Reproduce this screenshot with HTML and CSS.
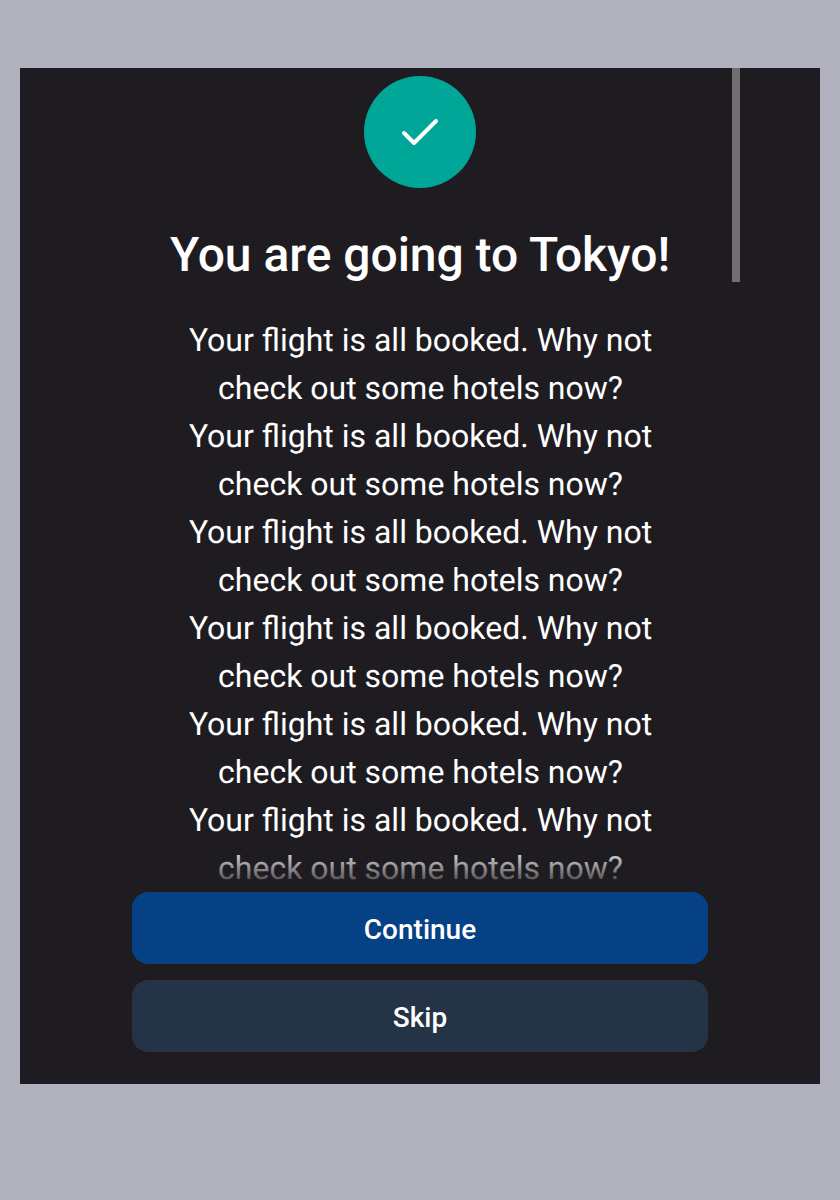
FILE: index.html
```html
<!DOCTYPE html>
<html lang="en">
<head>
<meta charset="utf-8">
<title>Booking confirmed</title>
<link rel="stylesheet" href="styles.css">
</head>
<body>
<main class="modal">
  <section class="content">
    <div class="badge">
      <svg class="check" viewBox="0 0 48 48" fill="none"><path d="M8 25 L18 35 L40 13" stroke="#fff" stroke-width="4" stroke-linecap="round" stroke-linejoin="round"/></svg>
    </div>
    <h1 class="title">You are going to Tokyo!</h1>
    <p class="description">Your flight is all booked. Why not<br>check out some hotels now?<br>Your flight is all booked. Why not<br>check out some hotels now?<br>Your flight is all booked. Why not<br>check out some hotels now?<br>Your flight is all booked. Why not<br>check out some hotels now?<br>Your flight is all booked. Why not<br>check out some hotels now?<br>Your flight is all booked. Why not<br>check out some hotels now?</p>
    <div class="scrollbar"></div>
    <div class="fade"></div>
  </section>
  <footer class="actions">
    <button class="button primary">Continue</button>
    <button class="button secondary">Skip</button>
  </footer>
</main>
</body>
</html>
```
FILE: styles.css
```css
* { box-sizing: border-box; }
body {
  margin: 0;
  height: 1200px;
  padding: 68px 20px 116px;
  background: #b1b1bd;
  font-family: Roboto, sans-serif;
  color: #fff;
  text-rendering: geometricPrecision;
}
.modal {
  height: 1016px;
  padding: 0 80px;
  background: #1f1c21;
}
.content {
  position: relative;
  height: 824px;
  padding: 8px 32px 0;
  overflow: hidden;
  text-align: center;
}
.badge {
  display: flex;
  align-items: center;
  justify-content: center;
  width: 112px;
  height: 112px;
  margin: 0 auto;
  border-radius: 50%;
  background: #00a698;
}
.check { width: 48px; height: 48px; }
.title {
  margin: 37px 0 0;
  font-size: 48px;
  line-height: 60px;
  font-weight: 500;
  letter-spacing: -0.04px;
  white-space: nowrap;
}
.description {
  margin: 31px 0 0;
  padding-left: 1px;
  font-size: 32px;
  line-height: 48px;
  white-space: nowrap;
}
.scrollbar {
  position: absolute;
  top: 0;
  right: 0;
  width: 8px;
  height: 214px;
  background: #706e71;
}
.fade {
  position: absolute;
  left: 0;
  right: 0;
  bottom: 0;
  height: 48px;
  background: linear-gradient(rgba(27, 24, 29, 0), #1f1c21);
}
.actions {
  display: flex;
  flex-direction: column;
  gap: 16px;
  padding: 0 32px;
}
.button {
  height: 72px;
  padding: 4px 0 0;
  border: 0;
  border-radius: 16px;
  font: 500 28px/36px Roboto, sans-serif;
  color: #fff;
}
.primary { background: #054184; }
.secondary { background: #243346; }
```
